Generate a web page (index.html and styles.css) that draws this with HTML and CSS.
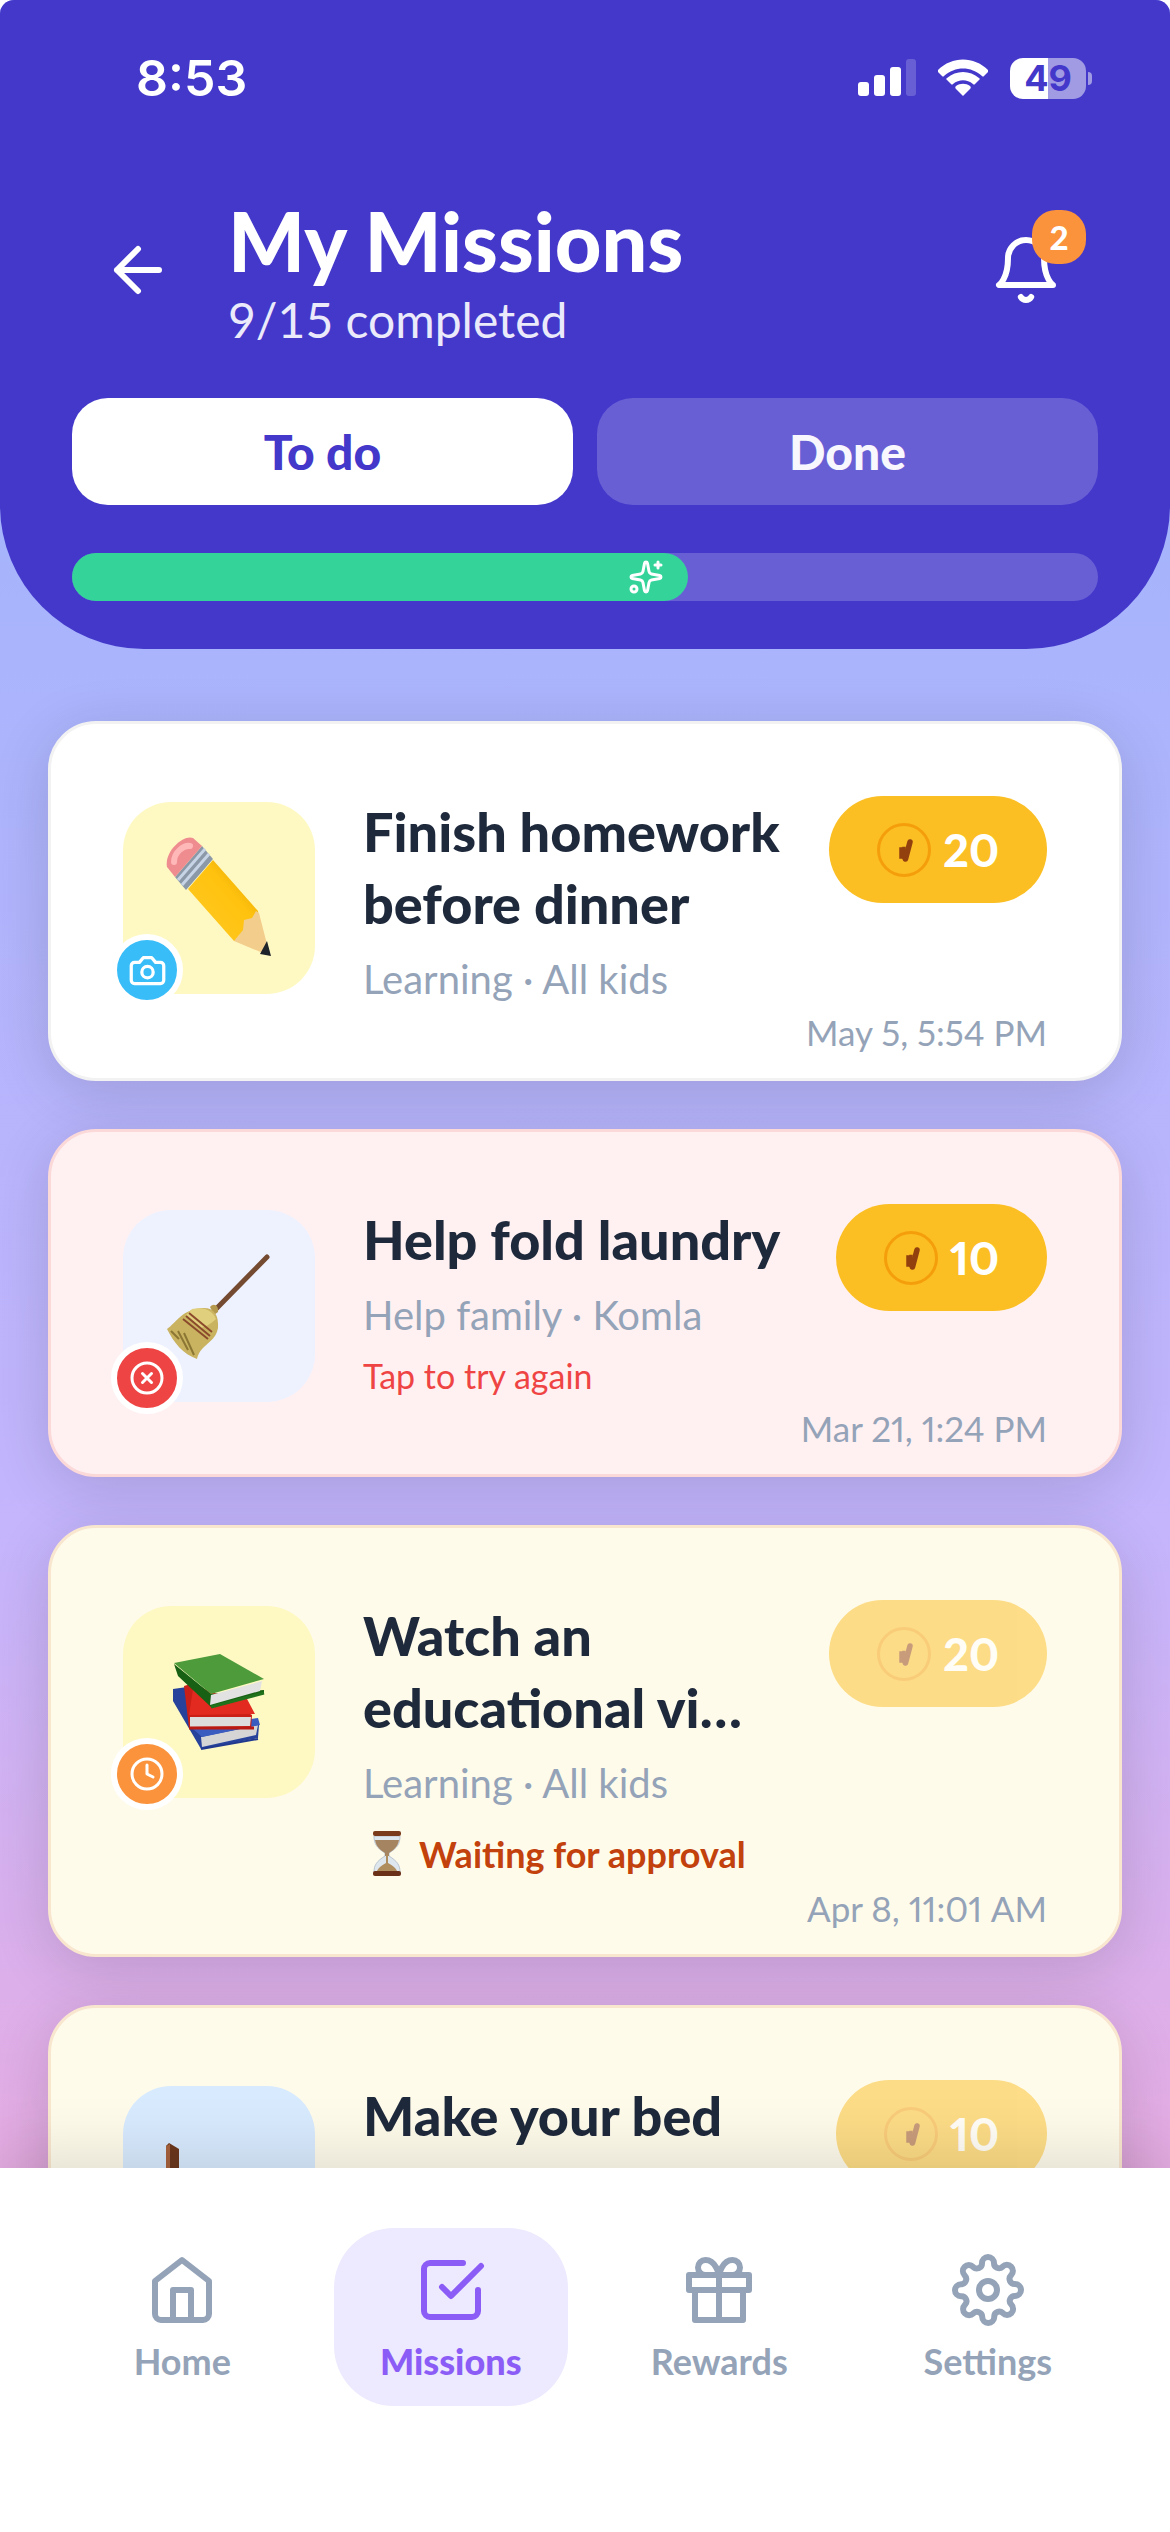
FILE: index.html
```html
<!DOCTYPE html>
<html lang="en">
<head>
<meta charset="utf-8">
<meta name="viewport" content="width=device-width, initial-scale=1">
<title>My Missions</title>
<link rel="stylesheet" href="styles.css">
</head>
<body>
<svg class="sprite" aria-hidden="true">
  <symbol id="coin" viewBox="0 0 54 54">
    <circle cx="27" cy="27" r="25.500" fill="none" stroke="#f59e0b" stroke-width="3"/>
    <path d="M33 19l-4.500 17" fill="none" stroke="#92400e" stroke-width="5.500" stroke-linecap="round"/>
    <path d="M24 26v8M27 25.500v9" fill="none" stroke="#92400e" stroke-width="3.500" stroke-linecap="square"/>
  </symbol>
  <symbol id="clock" viewBox="0 0 24 24">
    <circle cx="12" cy="12" r="10"/><path d="M12 6v6l4 2"/>
  </symbol>
  <symbol id="hourglass" viewBox="0 0 32 46">
    <path d="M3 5h26c0 8-3 12-11 17v3c8 5 11 9 11 16H3c0-7 3-11 11-16v-3C6 17 3 13 3 5z" fill="#dfe7ee" stroke="#b9c4cf"/>
    <path d="M4 9h24c-1 6-4 9-10 13v3h-4v-3C8 18 5 15 4 9z" fill="#a58462"/>
    <path d="M15 24h2v8c5 3 8 5 9 8H6c1-3 4-5 9-8z" fill="#b08d5c"/>
    <rect x="2" y="0" width="28" height="5" rx="2" fill="#7a3a1c"/><rect x="2" y="40" width="28" height="5" rx="2" fill="#6b3018"/>
  </symbol>
</svg>

<div class="app">
  <header class="header">
    <div class="status">
      <span class="time">8:53</span>
      <div class="indicators">
        <svg width="58" height="38" viewBox="0 0 58 38" fill="#fff"><rect y="23" width="11" height="14" rx="3"/><rect x="16" y="16" width="11" height="21" rx="3"/><rect x="32" y="8" width="11" height="29" rx="3"/><rect x="48" width="10" height="37" rx="3" opacity=".2"/></svg>
        <svg width="50" height="38" viewBox="0 0 50 38" fill="#fff"><path d="M25 37l-7-7c-1-1-1-2 0-3 4-3 10-3 14 0 1 1 1 2 0 3z"/><path d="M9 21c-1-1-1-1 0-2 9-8 23-8 32 0 1 1 1 1 0 2l-4 4c-1 1-1 1-2 0-6-5-14-5-20 0-1 1-1 1-2 0z"/><path d="M0 13c-1-1-1-1 0-2 14-14 36-14 50 0 1 1 1 1 0 2l-4 4c-1 1-1 1-2 0-11-10-27-10-38 0-1 1-1 1-2 0z"/></svg>
        <div class="battery"><span class="level">49</span><i class="nub"></i></div>
      </div>
    </div>

    <div class="topbar">
      <button class="back" aria-label="Back"><svg class="line" width="72" height="72" viewBox="0 0 24 24"><path d="m12 19-7-7 7-7M19 12H5"/></svg></button>
      <div class="heading">
        <h1>My Missions</h1>
        <p>9/15 completed</p>
      </div>
      <button class="bell" aria-label="Notifications"><svg class="line" width="72" height="72" viewBox="0 0 24 24"><path d="M18 8A6 6 0 0 0 6 8c0 7-3 9-3 9h18s-3-2-3-9M13.730 21a2 2 0 0 1-3.460 0"/></svg><span class="count">2</span></button>
    </div>

    <div class="tabs">
      <button class="tab tab-on">To do</button>
      <button class="tab">Done</button>
    </div>

    <div class="progress">
      <div class="bar" style="width:60%">
        <svg class="line" width="36" height="36" viewBox="0 0 24 24"><path d="M11.017 2.814a1 1 0 0 1 1.966 0l1.051 5.558a2 2 0 0 0 1.594 1.594l5.558 1.051a1 1 0 0 1 0 1.966l-5.558 1.051a2 2 0 0 0-1.594 1.594l-1.051 5.558a1 1 0 0 1-1.966 0l-1.051-5.558a2 2 0 0 0-1.594-1.594l-5.558-1.051a1 1 0 0 1 0-1.966l5.558-1.051a2 2 0 0 0 1.594-1.594zM20 2v4M22 4h-4"/><circle cx="4" cy="20" r="2"/></svg>
      </div>
    </div>
  </header>

  <main class="list">
    <article class="card">
      <div class="row">
        <div class="tile yellow">
          <svg width="106" height="122" viewBox="0 0 106 122">
            <defs><linearGradient id="lead" x1="0" y1="1" x2="1" y2="0"><stop offset="0" stop-color="#b98a1e"/><stop offset=".25" stop-color="#ffc61c"/><stop offset=".6" stop-color="#ffc20e"/><stop offset="1" stop-color="#d89b00"/></linearGradient></defs>
            <path d="M22 52L47 23 92 74 93 84 75 104 68 104z" fill="url(#lead)"/>
            <path d="M68 104l9-11 1-10 8-2 4-7 3 2 11 43z" fill="#f3cd8c"/>
            <path d="M94 117l7-13 4 15z" fill="#1d2329"/>
            <path d="M9 40L36 9l11 13-27 31z" fill="#8b98a8"/><path d="M12 43L39 12M16 48L43 17" stroke="#c6d4e6" stroke-width="3"/>
            <path d="M1 30C-2 14 18-3 27 1l9 8L9 40z" fill="#ee8c90"/><path d="M8 25C8 15 18 8 24 9" stroke="#ffb8b8" stroke-width="6" fill="none" stroke-linecap="round"/>
          </svg>
          <span class="badge blue"><svg class="line" width="39" height="39" viewBox="0 0 24 24"><path d="M14.500 4h-5L7 7H4a2 2 0 0 0-2 2v9a2 2 0 0 0 2 2h16a2 2 0 0 0 2-2V9a2 2 0 0 0-2-2h-3z"/><circle cx="12" cy="13" r="3.500"/></svg></span>
        </div>
        <div class="info">
          <h2>Finish homework before dinner</h2>
          <p class="meta">Learning · All kids</p>
        </div>
        <div class="coins"><svg width="54" height="54"><use href="#coin"/></svg>20</div>
      </div>
      <time class="date">May 5, 5:54&#8239;PM</time>
    </article>

    <article class="card rejected">
      <div class="row">
        <div class="tile indigo">
          <svg width="106" height="106" viewBox="0 0 106 106">
            <path d="M51 55L101 4" stroke="#744a31" stroke-width="5" stroke-linecap="round"/>
            <path d="M44 54c4-5 9-1 8 5l-4 3z" fill="#b59a4e"/>
            <path d="M1 76C10 70 17 55 38 55c10 0 15 7 14 20-3 16-17 15-21 31C17 101 8 90 1 76z" fill="#c9b361"/>
            <path d="M5 78l8 8M12 78l10 19M18 80l10 22" stroke="#8b7634" stroke-width="2"/>
            <path d="M26 56c10-2 20 0 24 10-6 6-12 8-15 9L20 62z" fill="#e0cf7c"/>
            <path d="M17 66l25 20M20 63l24 20M23 60l23 19" stroke="#8b4a2b" stroke-width="2"/>
          </svg>
          <span class="badge red"><svg class="line" width="36" height="36" viewBox="0 0 24 24"><circle cx="12" cy="12" r="10"/><path d="m15 9-6 6M9 9l6 6"/></svg></span>
        </div>
        <div class="info">
          <h2>Help fold laundry</h2>
          <p class="meta">Help family · Komla</p>
          <p class="retry">Tap to try again</p>
        </div>
        <div class="coins"><svg width="54" height="54"><use href="#coin"/></svg>10</div>
      </div>
      <time class="date">Mar 21, 1:24&#8239;PM</time>
    </article>

    <article class="card pending">
      <div class="row">
        <div class="tile yellow">
          <svg width="94" height="98" viewBox="0 0 94 98">
            <path d="M1 36l14-2 72 38-1 13-57 11L1 48z" fill="#27429b"/><path d="M29 84l57-12-2 10-54 12z" fill="#d5d5d5"/><path d="M29 96l57-10" stroke="#21388f" stroke-width="2"/><path d="M20 75l66-10 2 7-58 12z" fill="#3a5bc0"/>
            <path d="M12 33l10-3 58 32-1 14-62-1z" fill="#c91f16"/><path d="M17 62l4-26 54 10 8 15z" fill="#e32a20"/><path d="M18 64h61l-1 9-60 1z" fill="#dcdcdc"/><path d="M17 75h65" stroke="#b81912" stroke-width="3"/>
            <path d="M2 11l4 12 33 31 53-14v-3L39 41z" fill="#186114"/><path d="M2 10L48 1l44 25-53 15z" fill="#4d9b3b"/><path d="M39 42l51-14-2 10-50 14z" fill="#e2e2e2"/><path d="M39 54l53-14" stroke="#1f721b" stroke-width="3"/>
          </svg>
          <span class="badge orange"><svg class="line" width="36" height="36"><use href="#clock"/></svg></span>
        </div>
        <div class="info">
          <h2>Watch an educational vi…</h2>
          <p class="meta">Learning · All kids</p>
          <p class="waiting"><svg width="32" height="46"><use href="#hourglass"/></svg>Waiting for approval</p>
        </div>
        <div class="coins"><svg width="54" height="54"><use href="#coin"/></svg>20</div>
      </div>
      <time class="date">Apr 8, 11:01&#8239;AM</time>
    </article>

    <article class="card pending">
      <div class="row">
        <div class="tile sky">
          <svg width="106" height="78" viewBox="0 0 106 78"><path d="M0 3l3-3 10 6v58l-8 6-5-6z" fill="#6b371d"/><path d="M0 3l4-2v66l-4-3z" fill="#a8623d"/><path d="M13 44l86-4v24l-86 4z" fill="#6b371d"/></svg>
        </div>
        <div class="info">
          <h2>Make your bed</h2>
        </div>
        <div class="coins"><svg width="54" height="54"><use href="#coin"/></svg>10</div>
      </div>
    </article>
  </main>

  <nav class="nav">
    <a href="#home"><svg class="line" width="72" height="72" viewBox="0 0 24 24"><path d="m3 9 9-7 9 7v11a2 2 0 0 1-2 2H5a2 2 0 0 1-2-2zM9 22V12h6v10"/></svg>Home</a>
    <a href="#missions" class="current" aria-current="page"><svg class="line" width="72" height="72" viewBox="0 0 24 24"><path d="m9 11 3 3L22 4M21 12v7a2 2 0 0 1-2 2H5a2 2 0 0 1-2-2V5a2 2 0 0 1 2-2h11"/></svg>Missions</a>
    <a href="#rewards"><svg class="line" width="72" height="72" viewBox="0 0 24 24"><path d="M20 12v10H4V12M2 7h20v5H2zM12 22V7M12 7H7.500a2.500 2.500 0 0 1 0-5C11 2 12 7 12 7zM12 7h4.500a2.500 2.500 0 0 0 0-5C13 2 12 7 12 7z"/></svg>Rewards</a>
    <a href="#settings"><svg class="line" width="72" height="72" viewBox="0 0 24 24"><circle cx="12" cy="12" r="3"/><path d="M19.400 15a1.650 1.650 0 0 0 .33 1.820l.06.06a2 2 0 1 1-2.830 2.830l-.06-.06a1.650 1.650 0 0 0-1.820-.33 1.650 1.650 0 0 0-1 1.510V21a2 2 0 0 1-4 0v-.09A1.650 1.650 0 0 0 9 19.400a1.650 1.650 0 0 0-1.820.33l-.06.06a2 2 0 1 1-2.830-2.830l.06-.06a1.650 1.650 0 0 0 .33-1.820 1.650 1.650 0 0 0-1.510-1H3a2 2 0 0 1 0-4h.09A1.650 1.650 0 0 0 4.600 9a1.650 1.650 0 0 0-.33-1.820l-.06-.06a2 2 0 1 1 2.830-2.830l.06.06a1.650 1.650 0 0 0 1.820.33H9a1.650 1.650 0 0 0 1-1.510V3a2 2 0 0 1 4 0v.09a1.650 1.650 0 0 0 1 1.510 1.650 1.650 0 0 0 1.820-.33l.06-.06a2 2 0 1 1 2.830 2.830l-.06.06a1.650 1.650 0 0 0-.33 1.820V9a1.650 1.650 0 0 0 1.510 1H21a2 2 0 0 1 0 4h-.09a1.650 1.650 0 0 0-1.510 1z"/></svg>Settings</a>
  </nav>
</div>
</body>
</html>
```
FILE: styles.css
```css
* { box-sizing: border-box; margin: 0; padding: 0; }
body { background: #fff; font-family: Lato, "Noto Sans", sans-serif; color: #1e293b; }
button { border: 0; background: none; font: inherit; color: inherit; cursor: pointer; }
a { text-decoration: none; }
svg { display: block; flex: none; }
.sprite { position: absolute; width: 0; height: 0; }
.line { fill: none; stroke: currentColor; stroke-width: 2; stroke-linecap: round; stroke-linejoin: round; }

.app {
  display: flex; flex-direction: column; height: 100vh; overflow: hidden;
  border-radius: 14px 14px 0 0;
  background: linear-gradient(to bottom, #a5b4fc 20%, #c4b5fd 60%, #f9a8d4 100%);
}

/* Header */
.header { background: #4338ca; color: #fff; padding: 48px 72px; border-radius: 0 0 144px 144px; }
.status { display: flex; justify-content: space-between; align-items: center; height: 60px; padding: 0 12px 0 64px; }
.time { font-family: Inter, sans-serif; font-weight: 600; font-size: 50px; line-height: 60px; }
.indicators { display: flex; align-items: center; gap: 22px; }
.battery {
  position: relative; width: 76px; height: 41px; border-radius: 13px;
  background: linear-gradient(to right, #fff 50%, #a19be4 50%);
  display: flex; align-items: center; justify-content: center;
}
.level { font-family: Inter, sans-serif; font-weight: 700; font-size: 36px; line-height: 40px; color: #4338ca; }
.nub { position: absolute; right: -6px; top: 14px; width: 4px; height: 13px; border-radius: 0 4px 4px 0; background: #a19be4; }

.topbar { display: flex; align-items: center; gap: 24px; margin-top: 82px; }
.back, .bell { display: flex; align-items: center; justify-content: center; height: 144px; }
.back { width: 132px; }
.bell { position: relative; width: 144px; }
.heading { display: flex; flex-direction: column; gap: 4px; flex: 1; padding-top: 6px; }
.heading h1 { font-size: 81px; line-height: 90px; font-weight: 900; }
.heading p { font-size: 48px; line-height: 60px; color: #ebeafa; }
.count {
  position: absolute; top: 12px; right: 12px; width: 54px; height: 54px; border-radius: 24px;
  background: #fb923c; font-size: 33px; line-height: 54px; font-weight: 900; text-align: center;
}

.tabs { display: flex; gap: 24px; margin-top: 48px; }
.tab { flex: 1; height: 107px; border-radius: 36px; background: #695fd5; color: #f7f7fd; font-size: 48px; font-weight: 900; }
.tab-on { background: #fff; color: #4338ca; }

.progress { margin-top: 48px; height: 48px; border-radius: 24px; background: #695fd5; }
.bar { display: flex; align-items: center; justify-content: flex-end; height: 100%; padding-right: 24px; border-radius: 24px; background: #34d399; }

/* Mission list */
.list { flex: 1; min-height: 0; overflow: hidden; display: flex; flex-direction: column; gap: 48px; padding: 72px 48px; }
.card {
  flex: none; padding: 72px 72px 22px; border: 3px solid #f2f2f2; border-radius: 48px; background: #fff;
  box-shadow: 0 12px 60px rgba(0, 0, 0, .14);
}
.rejected { background: #fff1f2; border-color: #fcd9d9; }
.pending { background: #fffbeb; border-color: #f9e6cf; }
.row { display: flex; align-items: flex-start; }
.tile { position: relative; display: flex; align-items: center; justify-content: center; flex: none; width: 192px; height: 192px; margin: 6px 48px 0 0; border-radius: 48px; }
.yellow { background: #fef9c3; }
.indigo { background: #eef2ff; }
.sky { background: #d8eafe; }
.badge {
  position: absolute; left: -12px; bottom: -12px; width: 72px; height: 72px; border: 6px solid #fff; border-radius: 50%;
  display: flex; align-items: center; justify-content: center; color: #fff;
}
.blue { background: #38bdf8; }
.red { background: #ef4444; }
.orange { background: #fb923c; }
.info { flex: 1; min-width: 0; }
.info h2 { font-size: 54px; line-height: 72px; font-weight: 900; }
.meta { margin-top: 12px; font-size: 40px; line-height: 54px; color: #94a3b8; }
.retry { margin-top: 14px; font-size: 34px; line-height: 40px; color: #ef4444; }
.waiting { display: flex; align-items: center; gap: 16px; margin: 20px 0 4px; padding-left: 8px; font-size: 36px; line-height: 48px; font-weight: 700; color: #c2410c; }
.coins {
  display: flex; align-items: center; gap: 12px; flex: none; height: 107px; padding: 0 48px; border-radius: 54px;
  background: #fbbf24; color: #fff; font-size: 45px; font-weight: 900; font-variant-numeric: proportional-nums;
}
.pending .coins { opacity: .5; }
.date { display: block; margin-top: 2px; font-size: 35px; line-height: 48px; text-align: right; color: #94a3b8; font-variant-numeric: proportional-nums; }

/* Bottom navigation */
.nav {
  position: relative; display: grid; grid-template-columns: repeat(4, 1fr); justify-items: center;
  padding: 60px 48px 126px; background: #fff; box-shadow: 0 -12px 60px rgba(0, 0, 0, .12);
}
.nav a {
  display: flex; flex-direction: column; align-items: center; gap: 12px; padding: 26px 46px 22px; border-radius: 60px;
  font-size: 36px; line-height: 46px; font-weight: 700; color: #94a3b8;
}
.nav .current { background: #ede9fe; color: #8b5cf6; font-weight: 900; }
```
